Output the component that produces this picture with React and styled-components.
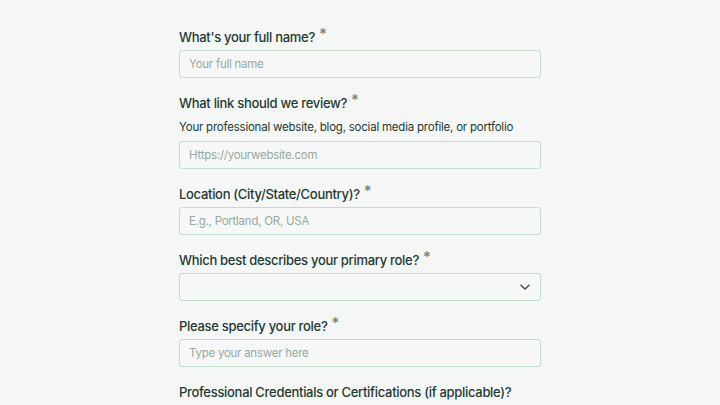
import React from "react";
import styled, { createGlobalStyle } from "styled-components";

const Global = createGlobalStyle`
  html, body { margin: 0; padding: 0; background: #f4f7f5; }
  body { font-family: Inter, "Noto Sans", sans-serif; }
  * { box-sizing: border-box; }
`;

const Form = styled.form`
  width: 362px;
  margin: 0 auto;
  padding-top: 27px;
  display: flex;
  flex-direction: column;
  gap: 15px;
`;

const Field = styled.div`
  display: flex;
  flex-direction: column;
  gap: ${(p) => (p.$described ? "4px" : "3px")};
`;

const Label = styled.label`
  font-size: 13px;
  line-height: 20px;
  font-weight: 500;
  letter-spacing: -0.3px;
  color: #1f3a33;
  white-space: nowrap;
`;

const Star = styled.span`
  color: #76847f;
  font-size: 15px;
  vertical-align: top;
  position: relative;
  top: -3px;
  margin-left: 4px;
`;

const Desc = styled.div`
  font-size: 11.5px;
  line-height: 20px;
  letter-spacing: -0.22px;
  color: #1f3a33;
  white-space: nowrap;
`;

const Input = styled.input`
  height: 28px;
  width: 100%;
  border: 1px solid #c3dccb;
  border-radius: 3px;
  background: #f5f8f6;
  padding: 0 9px;
  font-family: inherit;
  font-size: 11.5px;
  letter-spacing: -0.25px;
  color: #1f3a33;
  outline: none;
  &::placeholder { color: #98a7a1; }
`;

const SelectBox = styled.div`
  height: 28px;
  width: 100%;
  border: 1px solid #c3dccb;
  border-radius: 3px;
  background: #f5f8f6;
  display: flex;
  align-items: center;
  justify-content: flex-end;
  padding-right: 9px;
  color: #3b4a45;
`;

const Chevron = () => (
  <svg width="12" height="12" viewBox="0 0 12 12" fill="none">
    <path d="M2 4.2 L6 8 L10 4.2" stroke="currentColor" strokeWidth="1.4" strokeLinecap="round" strokeLinejoin="round" />
  </svg>
);

export default function App() {
  return (
    <>
      <Global />
      <Form>
        <Field>
          <Label>What's your full name?<Star>*</Star></Label>
          <Input placeholder="Your full name" />
        </Field>
        <Field $described>
          <Label>What link should we review?<Star>*</Star></Label>
          <Desc>Your professional website, blog, social media profile, or portfolio</Desc>
          <Input placeholder="Https://yourwebsite.com" />
        </Field>
        <Field>
          <Label>Location (City/State/Country)?<Star>*</Star></Label>
          <Input placeholder="E.g., Portland, OR, USA" />
        </Field>
        <Field>
          <Label>Which best describes your primary role?<Star>*</Star></Label>
          <SelectBox><Chevron /></SelectBox>
        </Field>
        <Field>
          <Label>Please specify your role?<Star>*</Star></Label>
          <Input placeholder="Type your answer here" />
        </Field>
        <Field>
          <Label>Professional Credentials or Certifications (if applicable)?</Label>
          <Input placeholder="" />
        </Field>
      </Form>
    </>
  );
}
